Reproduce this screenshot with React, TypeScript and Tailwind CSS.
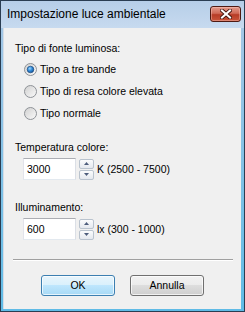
import React from 'react';

function CloseButton() {
  return (
    <div className="mt-[5px] w-[31px] h-[16px] rounded-[3px] border border-[#4f1a12] bg-[linear-gradient(to_bottom,#e39a8b_0%,#d06a57_45%,#b73c26_55%,#c9553b_100%)] flex items-center justify-center shadow-[inset_0_0_0_1px_rgba(255,210,200,0.4)]">
      <svg width="12" height="10" viewBox="0 0 12 10">
        <path d="M2 1.5 L10 8.5 M10 1.5 L2 8.5" stroke="#3f130c" strokeWidth="3.8" strokeLinecap="square" />
        <path d="M2 1.5 L10 8.5 M10 1.5 L2 8.5" stroke="#ffffff" strokeWidth="2.1" strokeLinecap="square" />
      </svg>
    </div>
  );
}

function Radio({ checked, id }: { checked?: boolean; id: string }) {
  return (
    <svg width="13" height="13" viewBox="0 0 13 13" className="shrink-0">
      <defs>
        <linearGradient id={`ring-${id}`} x1="0" y1="0" x2="1" y2="1">
          <stop offset="0" stopColor="#cfcfcf" />
          <stop offset="1" stopColor="#fbfbfb" />
        </linearGradient>
        <radialGradient id={`dot-${id}`} cx="0.4" cy="0.35" r="0.7">
          <stop offset="0" stopColor="#9fd8ff" />
          <stop offset="0.5" stopColor="#2f8ad8" />
          <stop offset="1" stopColor="#174f93" />
        </radialGradient>
      </defs>
      <circle cx="6.5" cy="6.5" r="6" fill={`url(#ring-${id})`} stroke="#8e9297" strokeWidth="1" />
      {checked && <circle cx="6.5" cy="6.5" r="3.3" fill={`url(#dot-${id})`} stroke="#1d4a7e" strokeWidth="0.7" />}
    </svg>
  );
}

function Spinner() {
  return (
    <div className="flex flex-col gap-[1px] w-[15px] h-[21px]">
      {[0, 1].map((i) => (
        <div
          key={i}
          className="flex-1 rounded-[2px] border border-[#b9c3ce] bg-[linear-gradient(to_bottom,#fbfcfd,#e4e8ee)] flex items-center justify-center"
        >
          <svg width="5" height="3" viewBox="0 0 5 3">
            <path d={i === 0 ? 'M0 3 L2.5 0 L5 3 Z' : 'M0 0 L2.5 3 L5 0 Z'} fill="#4d5d7c" />
          </svg>
        </div>
      ))}
    </div>
  );
}

function NumberField({ value, suffix }: { value: string; suffix: string }) {
  return (
    <div className="flex items-center h-[22px] pl-[20px]">
      <div className="w-[53px] h-[22px] bg-white border border-[#abadb3] border-l-[#e2e3ea] border-r-[#dbdfe6] border-b-[#e3e9ef] flex items-center pl-[3px] text-[10.5px]">
        {value}
      </div>
      <div className="ml-[3px]">
        <Spinner />
      </div>
      <span className="ml-[3px] text-[10.5px] leading-[15px]">{suffix}</span>
    </div>
  );
}

export default function App() {
  const options = ['Tipo a tre bande', 'Tipo di resa colore elevata', 'Tipo normale'];
  return (
    <div className="w-[245px] h-[312px] flex flex-col border border-[#2a3d52] bg-[linear-gradient(to_bottom,#a9c8e6,#5fbbe6)] overflow-hidden font-['Liberation_Sans',Arial,sans-serif] text-black">
      <div className="h-[27px] shrink-0 flex items-start justify-between pl-[6px] pr-[3px] bg-[linear-gradient(to_bottom,#b6cee8,#c7daef)]">
        <span className="mt-[6px] text-[12px] leading-[15px]">Impostazione luce ambientale</span>
        <CloseButton />
      </div>
      <div className="flex-1 ml-[2px] mr-[3px] mb-[2px] bg-[#f0f0f0] border-l border-[#d5dde6] flex flex-col text-[10.5px] leading-[15px]">
        <div className="mt-[13px] pl-[11px]">Tipo di fonte luminosa:</div>
        <div className="mt-[2px] flex flex-col">
          {options.map((o, i) => (
            <div key={o} className="h-[22px] flex items-center pl-[20px] gap-[3px]">
              <Radio checked={i === 0} id={`r${i}`} />
              <span>{o}</span>
            </div>
          ))}
        </div>
        <div className="mt-[16px] pl-[11px]">Temperatura colore:</div>
        <div className="mt-[3px] -ml-[1px]">
          <NumberField value="3000" suffix="K (2500 - 7500)" />
        </div>
        <div className="mt-[20px] pl-[11px]">Illuminamento:</div>
        <div className="mt-[3px] -ml-[1px]">
          <NumberField value="600" suffix="lx (300 - 1000)" />
        </div>
        <div className="mt-[19px] ml-[9px] mr-[8px] border-t border-[#a0a0a0] border-b border-b-white" />
        <div className="mt-[14px] flex justify-center gap-[15px]">
          <button className="w-[74px] h-[21px] rounded-[3px] border border-[#3c7fb1] bg-[linear-gradient(to_bottom,#e8f5fc_0%,#d9f0fc_50%,#bee6fd_50%,#a7d9f5_100%)] shadow-[inset_0_0_0_1px_rgba(255,255,255,0.7)] text-[10.5px]">
            OK
          </button>
          <button className="w-[74px] h-[21px] rounded-[3px] border border-[#707070] bg-[linear-gradient(to_bottom,#f2f2f2_0%,#ebebeb_50%,#dddddd_50%,#cfcfcf_100%)] shadow-[inset_0_0_0_1px_rgba(255,255,255,0.7)] text-[10.5px]">
            Annulla
          </button>
        </div>
      </div>
    </div>
  );
}
